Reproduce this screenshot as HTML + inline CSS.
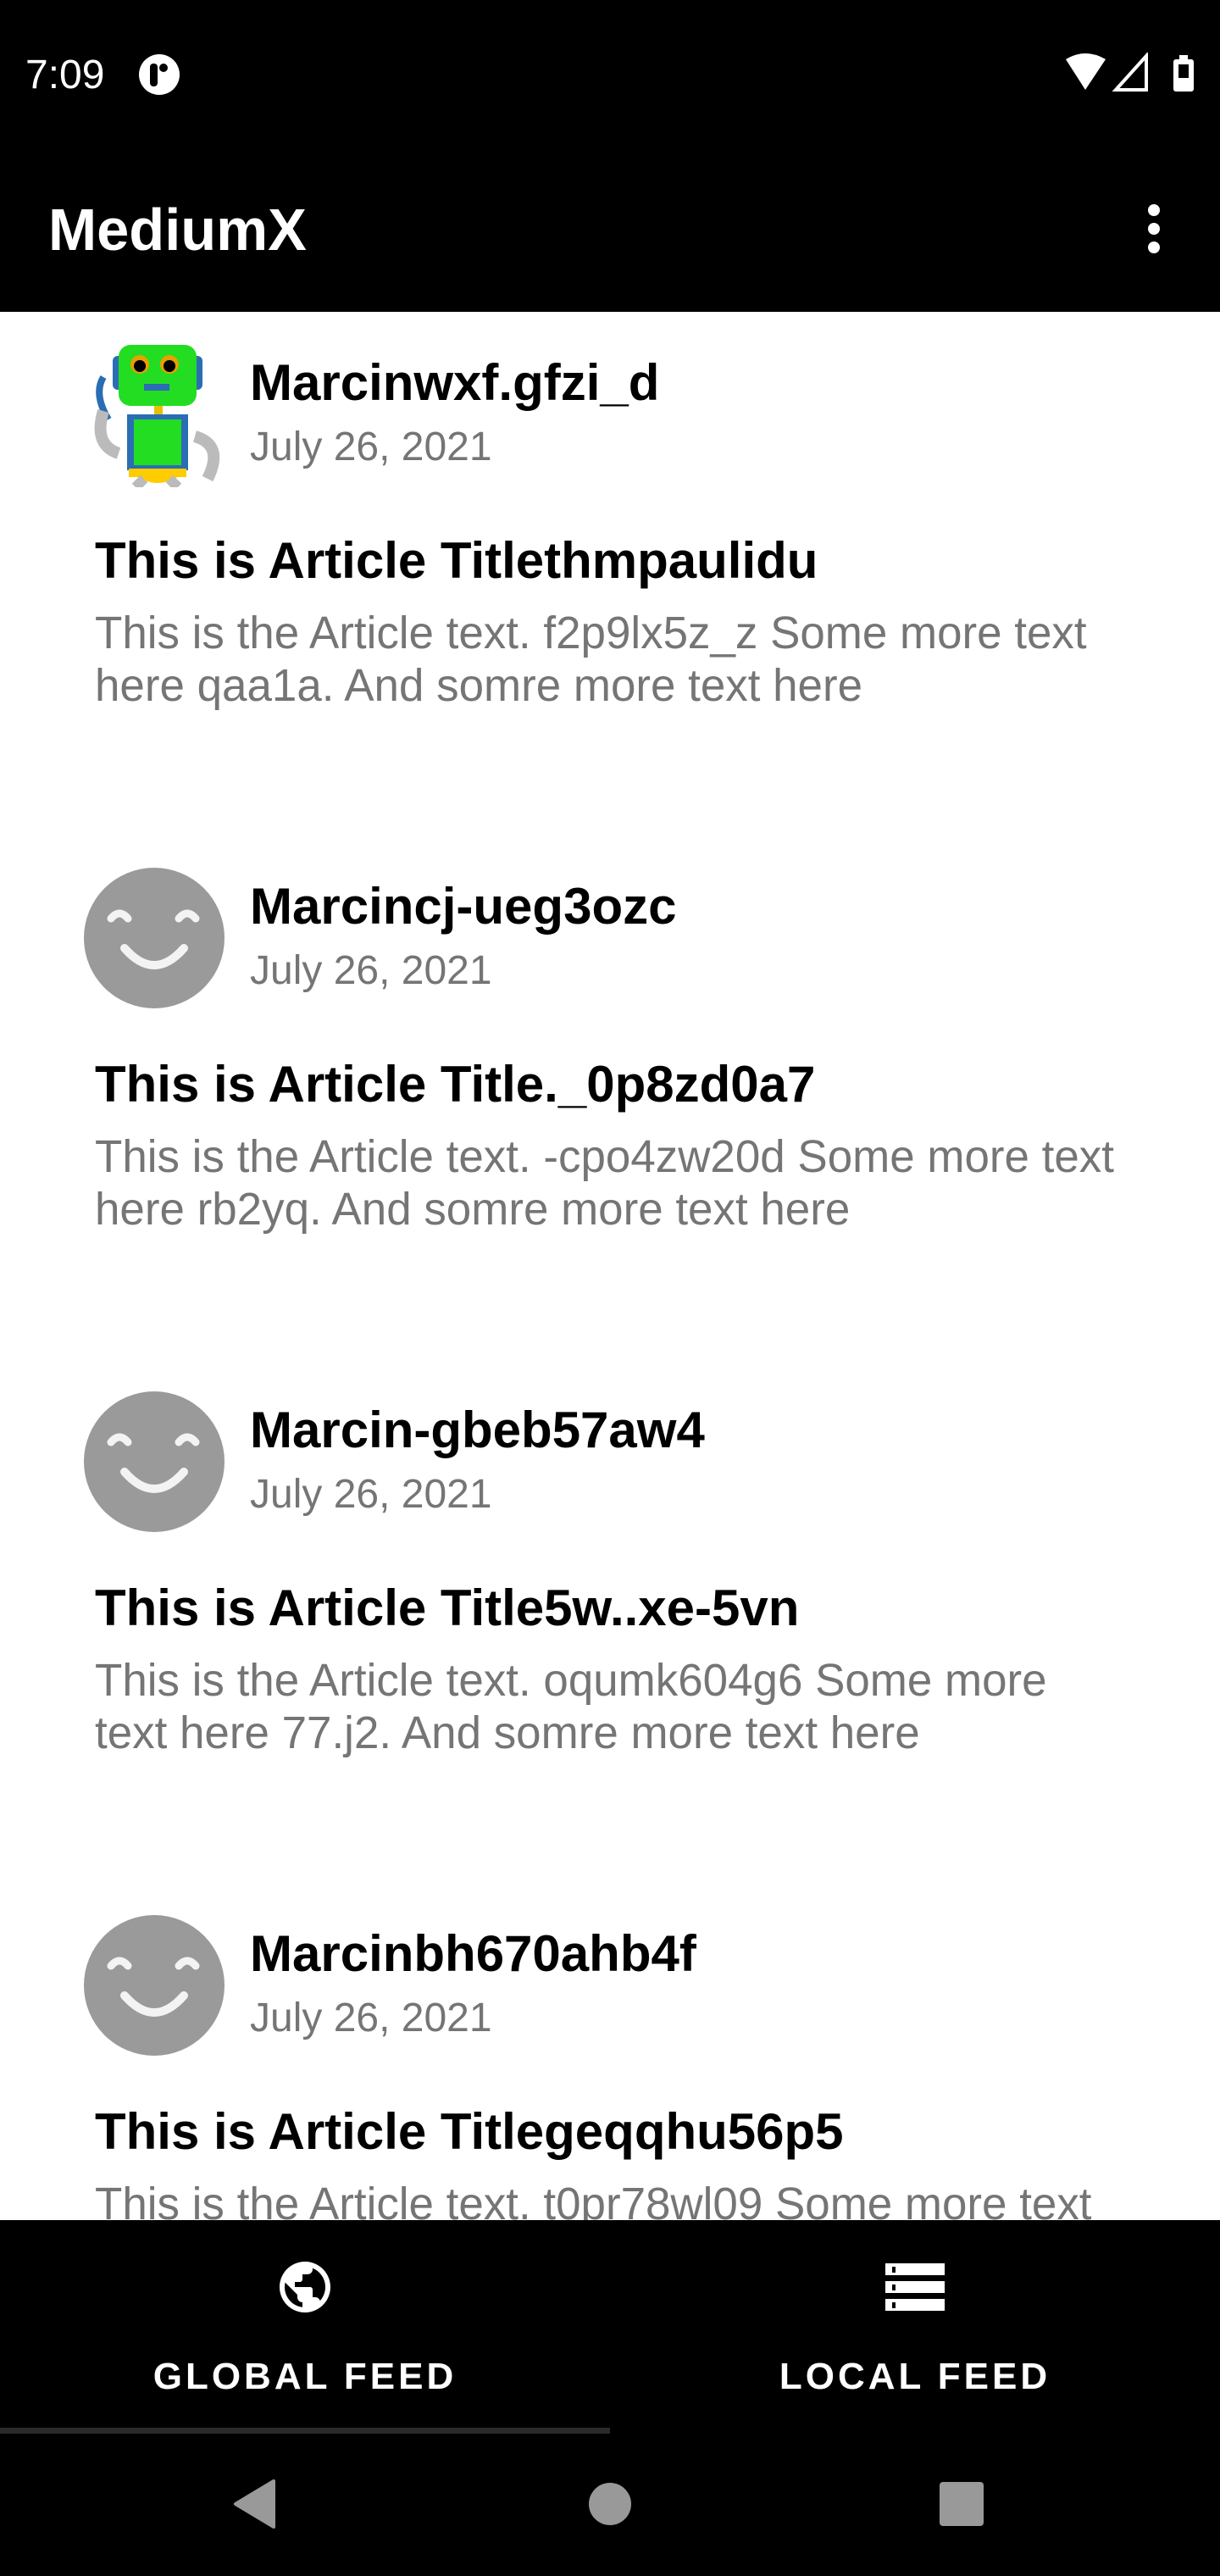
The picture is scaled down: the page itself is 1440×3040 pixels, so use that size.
<!DOCTYPE html>
<html><head><meta charset="utf-8"><style>
*{margin:0;padding:0;box-sizing:border-box}
body{width:1440px;height:3040px;background:#fff;position:relative;overflow:hidden;font-family:"Liberation Sans",sans-serif}
.abs{position:absolute;white-space:nowrap;line-height:1}
.sx{transform:scaleX(0.98);transform-origin:0 0}
.name{font-size:60px;font-weight:bold;color:#000;left:295px}
.date{font-size:48px;color:#757575;left:295px}
.title{font-size:60px;font-weight:bold;color:#000;left:112px}
.bodyt{font-size:54px;color:#757575;left:112px;line-height:62px}
</style></head><body>
<div class="abs" style="left:0;top:0;width:1440px;height:368px;background:#000"></div>
<div class="abs" style="left:30px;top:65px;font-size:48px;color:#fff">7:09</div>
<svg class="abs" style="left:162px;top:62px" width="52" height="52" viewBox="0 0 52 52"><circle cx="26" cy="26" r="24" fill="#fff"/><rect x="15" y="13" width="9" height="27" rx="4" fill="#000"/><circle cx="31" cy="18" r="5" fill="#000"/></svg>
<svg class="abs" style="left:1255px;top:62px" width="160" height="48" viewBox="0 0 160 48"><path d="M3 8 Q26 -6 50 8 L26 44 Z" fill="#fff"/><path d="M62 44 L98 44 L98 4 Z" fill="none" stroke="#fff" stroke-width="4"/><rect x="130" y="8" width="24" height="38" rx="3" fill="#fff"/><rect x="137" y="3" width="10" height="6" fill="#fff"/><rect x="136" y="14" width="12" height="16" fill="#000"/></svg>
<div class="abs" style="left:57px;top:236px;font-size:70px;font-weight:bold;color:#fff;transform:scaleX(0.98);transform-origin:0 0">MediumX</div>
<svg class="abs" style="left:1350px;top:240px" width="24" height="60" viewBox="0 0 24 60"><circle cx="12" cy="8" r="7" fill="#fff"/><circle cx="12" cy="30" r="7" fill="#fff"/><circle cx="12" cy="52" r="7" fill="#fff"/></svg>

<svg class="abs" style="left:100px;top:405px" width="165" height="170" viewBox="0 0 165 170">
<path d="M28 90 Q10 60 22 40" stroke="#2a6db5" stroke-width="8" fill="none"/>
<path d="M22 80 Q10 120 40 130" stroke="#bbb" stroke-width="14" fill="none"/>
<path d="M130 110 Q165 120 145 160" stroke="#bbb" stroke-width="14" fill="none"/>
<rect x="33" y="15" width="14" height="40" rx="6" fill="#2a6db5"/>
<rect x="125" y="15" width="14" height="40" rx="6" fill="#2a6db5"/>
<rect x="40" y="2" width="92" height="72" rx="14" fill="#22dd22"/>
<circle cx="65" cy="25" r="11" fill="#e8a000"/><circle cx="65" cy="27" r="7" fill="#000"/>
<circle cx="100" cy="25" r="11" fill="#e8a000"/><circle cx="100" cy="27" r="7" fill="#000"/>
<rect x="70" y="48" width="30" height="8" fill="#2a6db5"/>
<rect x="82" y="74" width="10" height="12" fill="#e8c000"/>
<rect x="50" y="84" width="72" height="66" fill="#2a6db5"/>
<rect x="58" y="90" width="56" height="54" fill="#22dd22"/>
<path d="M52 150 Q86 180 120 150 Z" fill="#ffcc00"/>
<rect x="52" y="148" width="68" height="10" fill="#ffcc00"/>
<path d="M70 160 L60 170 M100 160 L110 170" stroke="#bbb" stroke-width="12"/>
</svg>

<svg class="abs" style="left:99px;top:1024px" width="166" height="166" viewBox="0 0 166 166"><circle cx="83" cy="83" r="83" fill="#9a9a9a"/><path d="M32 60 Q42 48 52 60 M112 60 Q122 48 132 60" stroke="#f3f3f3" stroke-width="9" fill="none" stroke-linecap="round"/><path d="M48 95 Q83 135 118 95" stroke="#f3f3f3" stroke-width="10" fill="none" stroke-linecap="round"/></svg>
<svg class="abs" style="left:99px;top:1642px" width="166" height="166" viewBox="0 0 166 166"><circle cx="83" cy="83" r="83" fill="#9a9a9a"/><path d="M32 60 Q42 48 52 60 M112 60 Q122 48 132 60" stroke="#f3f3f3" stroke-width="9" fill="none" stroke-linecap="round"/><path d="M48 95 Q83 135 118 95" stroke="#f3f3f3" stroke-width="10" fill="none" stroke-linecap="round"/></svg>
<svg class="abs" style="left:99px;top:2260px" width="166" height="166" viewBox="0 0 166 166"><circle cx="83" cy="83" r="83" fill="#9a9a9a"/><path d="M32 60 Q42 48 52 60 M112 60 Q122 48 132 60" stroke="#f3f3f3" stroke-width="9" fill="none" stroke-linecap="round"/><path d="M48 95 Q83 135 118 95" stroke="#f3f3f3" stroke-width="10" fill="none" stroke-linecap="round"/></svg>

<div class="abs name" style="top:422px">Marcinwxf.gfzi_d</div>
<div class="abs date" style="top:504px">July 26, 2021</div>
<div class="abs title" style="top:632px">This is Article Titlethmpaulidu</div>
<div class="abs bodyt sx" style="top:716px">This is the Article text. f2p9lx5z_z Some more text<br>here qaa1a. And somre more text here</div>

<div class="abs name" style="top:1040px">Marcincj-ueg3ozc</div>
<div class="abs date" style="top:1122px">July 26, 2021</div>
<div class="abs title" style="top:1250px">This is Article Title._0p8zd0a7</div>
<div class="abs bodyt sx" style="top:1334px">This is the Article text. -cpo4zw20d Some more text<br>here rb2yq. And somre more text here</div>

<div class="abs name" style="top:1658px">Marcin-gbeb57aw4</div>
<div class="abs date" style="top:1740px">July 26, 2021</div>
<div class="abs title" style="top:1868px">This is Article Title5w..xe-5vn</div>
<div class="abs bodyt sx" style="top:1952px">This is the Article text. oqumk604g6 Some more<br>text here 77.j2. And somre more text here</div>

<div class="abs name" style="top:2276px">Marcinbh670ahb4f</div>
<div class="abs date" style="top:2358px">July 26, 2021</div>
<div class="abs title" style="top:2486px">This is Article Titlegeqqhu56p5</div>
<div class="abs bodyt sx" style="top:2570px">This is the Article text. t0pr78wl09 Some more text<br>here</div>

<div class="abs" style="left:0;top:2620px;width:1440px;height:420px;background:#000"></div>
<svg class="abs" style="left:324px;top:2663px" width="72" height="72" viewBox="0 0 24 24"><path fill="#fff" d="M12 2C6.48 2 2 6.48 2 12s4.48 10 10 10 10-4.48 10-10S17.52 2 12 2zm-1 17.930c-3.950-.49-7-3.85-7-7.93 0-.62.08-1.21.21-1.79L9 15v1c0 1.1.9 2 2 2v1.93zm6.9-2.540c-.26-.81-1-1.39-1.9-1.39h-1v-3c0-.55-.45-1-1-1H8v-2h2c.55 0 1-.45 1-1V7h2c1.1 0 2-.9 2-2v-.41c2.93 1.19 5 4.06 5 7.410 0 2.08-.8 3.97-2.1 5.39z"/></svg>
<svg class="abs" style="left:1045px;top:2671px" width="70" height="56" viewBox="0 0 70 56"><rect x="0" y="0" width="70" height="14" fill="#fff"/><rect x="0" y="21" width="70" height="14" fill="#fff"/><rect x="0" y="42" width="70" height="14" fill="#fff"/><rect x="8" y="4" width="4" height="7" fill="#000"/><rect x="8" y="25" width="4" height="7" fill="#000"/><rect x="8" y="46" width="4" height="7" fill="#000"/></svg>
<div class="abs" style="left:0;width:720px;top:2783px;text-align:center;font-size:44px;font-weight:bold;color:#fff;letter-spacing:4px">GLOBAL FEED</div>
<div class="abs" style="left:720px;width:720px;top:2783px;text-align:center;font-size:44px;font-weight:bold;color:#fff;letter-spacing:4px">LOCAL FEED</div>
<div class="abs" style="left:0;top:2865px;width:720px;height:7px;background:#2a2a2a"></div>
<svg class="abs" style="left:270px;top:2925px" width="60" height="60" viewBox="0 0 60 60"><path d="M53 3 L53 57 L8 30 Z" fill="#999" stroke="#999" stroke-width="4" stroke-linejoin="round"/></svg>
<div class="abs" style="left:695px;top:2930px;width:50px;height:50px;border-radius:50%;background:#999"></div>
<div class="abs" style="left:1109px;top:2929px;width:52px;height:52px;border-radius:4px;background:#999"></div>
</body></html>
